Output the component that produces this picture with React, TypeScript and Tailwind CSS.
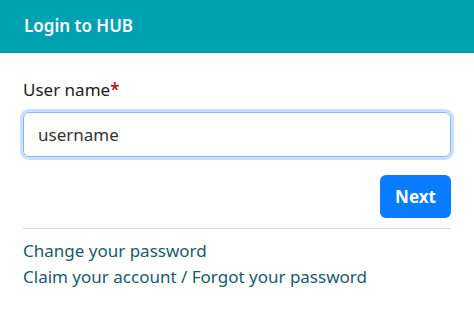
export default function App() {
  return (
    <div className="h-[331px] w-[474px] bg-white font-['Noto_Sans',sans-serif]">
      {/* Header */}
      <div className="flex h-[53px] items-center border-b border-[#0a8b98] bg-[#00a1b0] px-6">
        <h1 className="text-[17px] font-semibold text-white">Login to HUB</h1>
      </div>

      <div className="px-[23px] pt-[25px]">
        <label className="block text-[17px] font-normal leading-6 text-[#222]">
          User name<span className="font-semibold text-[#c4122f]">*</span>
        </label>
        <div className="mt-[10px] flex h-[45px] items-center rounded-md border border-[#86b7fe] px-[14px] shadow-[0_0_0_3px_rgba(13,110,253,0.22)]">
          <span className="text-[17px] text-[#333]">username</span>
        </div>

        <div className="mt-[18px] flex justify-end">
          <button className="h-[43px] w-[71px] rounded-md bg-[#0a7cff] text-[17px] font-bold text-white">
            Next
          </button>
        </div>

        <div className="mt-[10px] border-t border-[#dcdcdc]" />

        <div className="mt-[9px] flex flex-col text-[17px] leading-[26px] text-[#175c68]">
          <a>Change your password</a>
          <a>Claim your account / Forgot your password</a>
        </div>
      </div>
    </div>
  );
}
